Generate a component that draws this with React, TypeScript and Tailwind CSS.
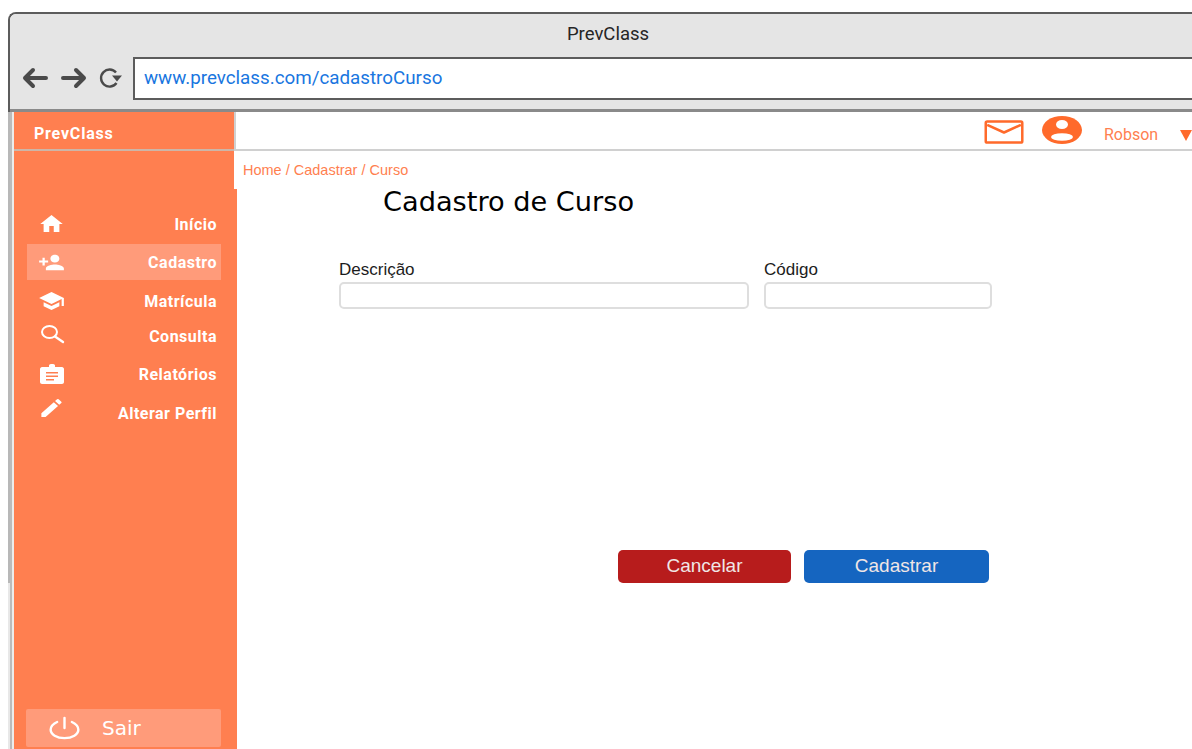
import { MdHome, MdPersonAdd, MdSchool, MdCreate } from "react-icons/md";
import type { ReactNode } from "react";

type NavItem = {
  label: string;
  icon: ReactNode;
  spacing: string;
  active?: boolean;
};

function SearchGlyph() {
  return (
    <svg viewBox="0 0 26 24" className="w-[26px] h-[24px] -mt-[2px]" fill="none" stroke="currentColor">
      <ellipse cx="10.5" cy="9" rx="7.5" ry="6" strokeWidth="2" />
      <path d="M16 13.5 L24 19" strokeWidth="2.4" strokeLinecap="round" />
    </svg>
  );
}

function BadgeGlyph() {
  return (
    <svg viewBox="0 0 26 24" className="w-[26px] h-[24px]">
      <path
        fill="currentColor"
        fillRule="evenodd"
        d="M3 5h7V3.500C10 2.500 11 2 13 2s3 .5 3 1.500V5h7c1 0 2 1 2 2v13c0 1-1 2-2 2H3c-1 0-2-1-2-2V7c0-1 1-2 2-2zM7 10v1.500h12V10zM7 13.500V15h12v-1.500zM7 17v1.500h8V17z"
      />
    </svg>
  );
}

function PowerGlyph() {
  return (
    <svg viewBox="0 0 34 26" className="w-[33px] h-[24px]" fill="none" stroke="currentColor" strokeWidth="2.6" strokeLinecap="round">
      <path d="M9 6.500C4.500 8.500 2 11.500 2 15c0 5 6.500 9 15 9s15-4 15-9c0-3.500-2.500-6.500-7-8.500" />
      <path d="M17 2v11" />
    </svg>
  );
}

function MailGlyph() {
  return (
    <svg viewBox="0 0 42 26" className="w-[41px] h-[25px]" fill="none" stroke="#ff6a2b" strokeWidth="2.6" strokeLinejoin="round">
      <rect x="1.500" y="1.500" width="38" height="22" rx="1.500" />
      <path d="M3 5 L20.500 13 L38 5" />
    </svg>
  );
}

function UserGlyph() {
  return (
    <svg viewBox="0 0 40 28" className="w-[40px] h-[28px]">
      <ellipse cx="20" cy="14" rx="20" ry="14" fill="#ff6a2b" />
      <ellipse cx="20" cy="8.500" rx="6" ry="4.500" fill="#fff" />
      <ellipse cx="20" cy="21" rx="11" ry="3.800" fill="#fff" />
    </svg>
  );
}

// os ícones do menu são levemente achatados
const items: NavItem[] = [
  { label: "Início", icon: <MdHome preserveAspectRatio="none" className="w-[28px] h-[24px] -mt-[1px]" />, spacing: "mt-0" },
  { label: "Cadastro", icon: <MdPersonAdd preserveAspectRatio="none" className="w-[29px] h-[23px]" />, spacing: "mt-[2px]", active: true },
  { label: "Matrícula", icon: <MdSchool preserveAspectRatio="none" className="w-[29px] h-[24px]" />, spacing: "mt-[3px]" },
  { label: "Consulta", icon: <SearchGlyph />, spacing: "-mt-[1px]" },
  { label: "Relatórios", icon: <BadgeGlyph />, spacing: "mt-[2px]" },
  { label: "Alterar Perfil", icon: <MdCreate preserveAspectRatio="none" className="w-[34px] h-[24px] -mt-[10px]" />, spacing: "mt-[3px]" },
];

function Sidebar() {
  return (
    <aside className="w-[223px] h-full shrink-0 bg-[#ff7f50] flex flex-col text-white font-['Roboto',sans-serif]">
      <div className="h-[39px] mr-[3px] flex items-center pl-[20px] pt-[6px] border-b-2 border-[#cdb5a8] text-[16px] font-bold tracking-[0.8px]">
        PrevClass
      </div>
      <nav className="mt-[55px] ml-[13px] w-[194px] flex flex-col">
        {items.map((item) => (
          <div
            key={item.label}
            className={`h-[36px] flex items-center justify-between pl-[11px] pr-[4px] ${item.spacing} ${item.active ? "bg-[#ff9b7a]" : ""}`}
          >
            <span className="w-[27px] flex justify-center">{item.icon}</span>
            <span className="pt-[1px] text-[16px] font-bold tracking-[0.5px]">{item.label}</span>
          </div>
        ))}
      </nav>
      <div className="mt-auto mb-[2px] ml-[12px] w-[195px] h-[38px] rounded-[2px] bg-[#ff9b7a] flex items-center pl-[22px] gap-[21px] font-['DejaVu_Sans',sans-serif] text-[20px]">
        <PowerGlyph />
        <span>Sair</span>
      </div>
    </aside>
  );
}

function Field({ label, width }: { label: string; width: string }) {
  return (
    <label className={`flex flex-col ${width}`}>
      <span className="text-[17px] leading-[18px] text-[#1c1c1c]">{label}</span>
      <input className="mt-[3px] h-[27px] rounded-[5px] border-2 border-[#dedede] bg-white" />
    </label>
  );
}

export default function App() {
  return (
    <div className="h-[749px] overflow-hidden bg-white pt-[12px] pl-[8px] font-['Liberation_Sans',sans-serif]">
      <div className="w-[1300px] h-[737px] rounded-tl-[8px] border-l-[2px] border-t-[2px] border-[#5c5c5c] flex flex-col">
        {/* barra do navegador */}
        <div className="h-[98px] shrink-0 bg-[#e5e5e5] border-b-[3px] border-[#8a8a8a] rounded-tl-[6px]">
          <div className="w-[1196px] h-[41px] pt-[9px] text-center text-[18.500px] leading-[22px] text-[#262626] font-['Roboto',sans-serif]">
            PrevClass
          </div>
          <div className="flex items-start h-[45px] pt-[2px]">
            <svg viewBox="0 0 66 26" className="mt-[8px] ml-[12px] w-[66px] h-[26px]" fill="none" stroke="#4a4a4a" strokeWidth="4" strokeLinecap="round" strokeLinejoin="round">
              <path d="M24 13H3M11 5l-8 8 8 8" />
              <path d="M41 13H62M54 5l8 8-8 8" />
            </svg>
            <svg viewBox="0 0 26 24" className="mt-[9px] ml-[10px] w-[26px] h-[24px]" fill="none" stroke="#4a4a4a" strokeWidth="2.400">
              <path d="M18 6.500A8.500 8.500 0 1 0 18.500 17" />
              <path d="M14 9.500h10l-5 6z" fill="#4a4a4a" stroke="none" />
            </svg>
            <div className="ml-[9px] flex-1 h-[43px] bg-white border-2 border-[#5c5c5c] flex items-center pl-[9px] text-[18.800px] text-[#1976e0] font-['Roboto',sans-serif]">
              www.prevclass.com/cadastroCurso
            </div>
          </div>
        </div>

        <div className="flex-1 min-h-0 flex -ml-[2px]">
          {/* filete cinza à esquerda */}
          <div className="w-[2px] shrink-0 flex flex-col">
            <div className="h-[471px] bg-[#b8b8b8]" />
            <div className="flex-1 bg-[#e8e8e8]" />
          </div>
          <div className="w-[2px] shrink-0 bg-[#bbbbbb]" />
          <div className="w-[2px] shrink-0 bg-[#ececec]" />
          <Sidebar />
          <main className="flex-1 flex flex-col">
            {/* cabeçalho do usuário */}
            <header className="relative -ml-[3px] h-[39px] bg-white border-l-2 border-b-2 border-[#d0d0d0] flex items-center pl-[748px]">
              <span className="mt-[4px]"><MailGlyph /></span>
              <span className="ml-[17px] -mt-[1px]"><UserGlyph /></span>
              <span className="ml-[22px] mt-[8px] text-[16px] text-[#ff7f50] font-['Roboto',sans-serif]">Robson</span>
              <span className="ml-[22px] mt-[9px] w-0 h-0 border-l-[6px] border-r-[6px] border-t-[11px] border-l-transparent border-r-transparent border-t-[#ff6a2b]" />
            </header>
            <div className="relative -ml-[3px] w-[172px] h-[38px] pl-[9px] pt-[11px] bg-white text-[14.500px] leading-[16px] text-[#ff7f50] whitespace-nowrap">
              Home / Cadastrar / Curso
            </div>
            <h1 className="-mt-[3px] ml-[146px] text-[27.200px] leading-[32px] text-black font-['DejaVu_Sans',sans-serif]">
              Cadastro de Curso
            </h1>
            <div className="mt-[43px] ml-[102px] flex gap-[15px]">
              <Field label="Descrição" width="w-[410px]" />
              <Field label="Código" width="w-[228px]" />
            </div>
            <div className="mt-[241px] ml-[381px] flex gap-[13px] text-[19px] text-[#f0e6e6]">
              <button className="w-[173px] h-[33px] rounded-[5px] bg-[#b71c1c]">Cancelar</button>
              <button className="w-[185px] h-[33px] rounded-[5px] bg-[#1565c0]">Cadastrar</button>
            </div>
          </main>
        </div>
      </div>
    </div>
  );
}
